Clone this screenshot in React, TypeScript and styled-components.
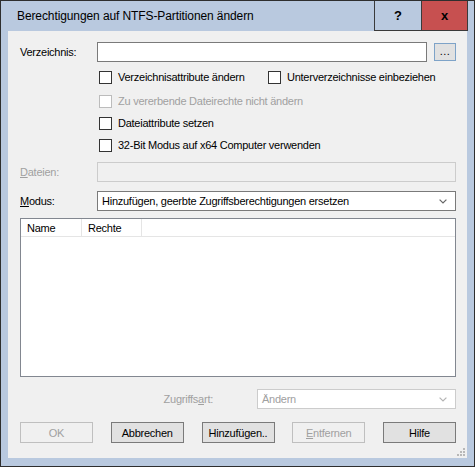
import React from "react";
import styled, { createGlobalStyle } from "styled-components";

const Global = createGlobalStyle`
  html, body { margin: 0; padding: 0; background: #ffffff; }
  body {
    font-family: "Liberation Sans", Arial, sans-serif;
    font-size: 11px;
    letter-spacing: -0.25px;
    color: #000;
  }
  * { box-sizing: border-box; }
`;

const Window = styled.div`
  width: 475px;
  height: 467px;
  border: 1px solid #2e2e2e;
  background: #b9c9df;
  display: flex;
  flex-direction: column;
`;

const TitleBar = styled.div`
  height: 30px;
  flex: none;
  display: flex;
  align-items: stretch;
`;

const Title = styled.div`
  flex: 1;
  padding-left: 16px;
  display: flex;
  align-items: center;
  font-size: 12px;
  letter-spacing: -0.1px;
  color: #000;
`;

const CaptionButton = styled.div<{ $close?: boolean }>`
  width: 47px;
  border: 1px solid #3a3a3a;
  border-top: none;
  ${(p) => (p.$close ? "margin-right: 6px;" : "border-right: none;")}
  background: ${(p) => (p.$close ? "#c75050" : "transparent")};
  display: flex;
  align-items: center;
  justify-content: center;
  font-weight: bold;
  font-size: 13px;
  letter-spacing: 0;
  color: #000;
`;

const Client = styled.div`
  position: relative;
  flex: 1;
  margin: 0 7px 8px 7px;
  background: #f0f0f0;
  padding: 11px 11px 15px 12px;
  display: flex;
  flex-direction: column;
`;

const FieldRow = styled.div<{ $top?: number; $height?: number }>`
  display: flex;
  align-items: center;
  height: ${(p) => p.$height ?? 20}px;
  margin-top: ${(p) => p.$top ?? 0}px;
`;

const Label = styled.div<{ $disabled?: boolean }>`
  width: 77px;
  flex: none;
  color: ${(p) => (p.$disabled ? "#a0a0a0" : "#000")};
`;

const TextBox = styled.div<{ $disabled?: boolean }>`
  flex: 1;
  align-self: stretch;
  background: ${(p) => (p.$disabled ? "#f0f0f0" : "#ffffff")};
  border: 1px solid ${(p) => (p.$disabled ? "#cccccc" : "#7a7a7a")};
`;

const BrowseButton = styled.div`
  width: 22px;
  height: 18px;
  margin-left: 7px;
  flex: none;
  background: #e1e1e1;
  border: 1px solid #7ea3c8;
  display: flex;
  align-items: flex-end;
  justify-content: center;
  padding-bottom: 3px;
  font-size: 11px;
  line-height: 1;
  letter-spacing: 0.5px;
`;

const CheckRow = styled.div<{ $top?: number }>`
  display: flex;
  align-items: center;
  height: 22px;
  margin-left: 79px;
  margin-top: ${(p) => p.$top ?? 0}px;
`;

const CheckItem = styled.label<{ $width?: number; $disabled?: boolean }>`
  display: flex;
  align-items: center;
  gap: 6px;
  width: ${(p) => (p.$width ? `${p.$width}px` : "auto")};
  color: ${(p) => (p.$disabled ? "#a0a0a0" : "#000")};
`;

const Box = styled.span<{ $disabled?: boolean }>`
  width: 13px;
  height: 13px;
  flex: none;
  background: #ffffff;
  border: 1px solid ${(p) => (p.$disabled ? "#bcbcbc" : "#333333")};
`;

const Combo = styled.div<{ $disabled?: boolean; $width?: number }>`
  ${(p) => (p.$width ? `width: ${p.$width}px; flex: none;` : "flex: 1;")}
  align-self: stretch;
  display: flex;
  align-items: center;
  justify-content: space-between;
  padding: 0 8px 0 4px;
  background: #ffffff;
  border: 1px solid ${(p) => (p.$disabled ? "#cccccc" : "#7a7a7a")};
  color: ${(p) => (p.$disabled ? "#a0a0a0" : "#000")};
`;

const ListView = styled.div`
  margin-top: 7px;
  height: 159px;
  background: #ffffff;
  border: 1px solid #828790;
  display: flex;
  flex-direction: column;
`;

const ListHeader = styled.div`
  height: 18px;
  display: flex;
  border-bottom: 1px solid #e5e5e5;
`;

const HeaderCell = styled.div<{ $width: number }>`
  width: ${(p) => p.$width}px;
  border-right: 1px solid #e5e5e5;
  padding-left: 6px;
  display: flex;
  align-items: center;
`;

const AccessRow = styled.div`
  display: flex;
  align-items: center;
  justify-content: flex-end;
  height: 20px;
  margin-top: 12px;
`;

const AccessLabel = styled.div`
  color: #a0a0a0;
  margin-right: 44px;
`;

const ButtonRow = styled.div`
  display: flex;
  justify-content: space-between;
  margin-top: 13px;
`;

const Button = styled.div<{ $disabled?: boolean }>`
  width: 73px;
  height: 21px;
  display: flex;
  align-items: center;
  justify-content: center;
  background: ${(p) => (p.$disabled ? "#f0f0f0" : "#e1e1e1")};
  border: 1px solid ${(p) => (p.$disabled ? "#bfbfbf" : "#7a7a7a")};
  color: ${(p) => (p.$disabled ? "#a0a0a0" : "#000")};
`;

const Grip = styled.svg`
  position: absolute;
  right: 2px;
  bottom: 2px;
`;

const Chevron = ({ color }: { color: string }) => (
  <svg width="8" height="5" viewBox="0 0 8 5">
    <path d="M0.6 0.6 L4 4 L7.4 0.6" fill="none" stroke={color} strokeWidth="1.2" />
  </svg>
);

export default function App() {
  return (
    <>
      <Global />
      <Window>
        <TitleBar>
          <Title>Berechtigungen auf NTFS-Partitionen ändern</Title>
          <CaptionButton>?</CaptionButton>
          <CaptionButton $close>x</CaptionButton>
        </TitleBar>
        <Client>
          <FieldRow>
            <Label>Verzeichnis:</Label>
            <TextBox />
            <BrowseButton>...</BrowseButton>
          </FieldRow>

          <CheckRow $top={4}>
            <CheckItem $width={169}>
              <Box />
              Verzeichnisattribute ändern
            </CheckItem>
            <CheckItem>
              <Box />
              Unterverzeichnisse einbeziehen
            </CheckItem>
          </CheckRow>
          <CheckRow $top={2}>
            <CheckItem $disabled>
              <Box $disabled />
              Zu vererbende Dateirechte nicht ändern
            </CheckItem>
          </CheckRow>
          <CheckRow>
            <CheckItem>
              <Box />
              Dateiattribute setzen
            </CheckItem>
          </CheckRow>
          <CheckRow>
            <CheckItem>
              <Box />
              32-Bit Modus auf x64 Computer verwenden
            </CheckItem>
          </CheckRow>

          <FieldRow $top={6}>
            <Label $disabled>
              <u>D</u>ateien:
            </Label>
            <TextBox $disabled />
          </FieldRow>

          <FieldRow $top={9} $height={20}>
            <Label>
              <u>M</u>odus:
            </Label>
            <Combo>
              Hinzufügen, geerbte Zugriffsberechtigungen ersetzen
              <Chevron color="#666" />
            </Combo>
          </FieldRow>

          <ListView>
            <ListHeader>
              <HeaderCell $width={61}>Name</HeaderCell>
              <HeaderCell $width={60}>Rechte</HeaderCell>
            </ListHeader>
          </ListView>

          <AccessRow>
            <AccessLabel>
              Zugriffs<u>a</u>rt:
            </AccessLabel>
            <Combo $disabled $width={199}>
              Ändern
              <Chevron color="#b4b4b4" />
            </Combo>
          </AccessRow>

          <ButtonRow>
            <Button $disabled>OK</Button>
            <Button>Abbrechen</Button>
            <Button>Hinzufügen..</Button>
            <Button $disabled>
              <u>E</u>ntfernen
            </Button>
            <Button>Hilfe</Button>
          </ButtonRow>

          <Grip width="8" height="8" viewBox="0 0 8 8">
            <rect x="6" y="0" width="2" height="2" fill="#b8b8b8" />
            <rect x="3" y="3" width="2" height="2" fill="#b8b8b8" />
            <rect x="6" y="3" width="2" height="2" fill="#b8b8b8" />
            <rect x="0" y="6" width="2" height="2" fill="#b8b8b8" />
            <rect x="3" y="6" width="2" height="2" fill="#b8b8b8" />
            <rect x="6" y="6" width="2" height="2" fill="#b8b8b8" />
          </Grip>
        </Client>
      </Window>
    </>
  );
}
